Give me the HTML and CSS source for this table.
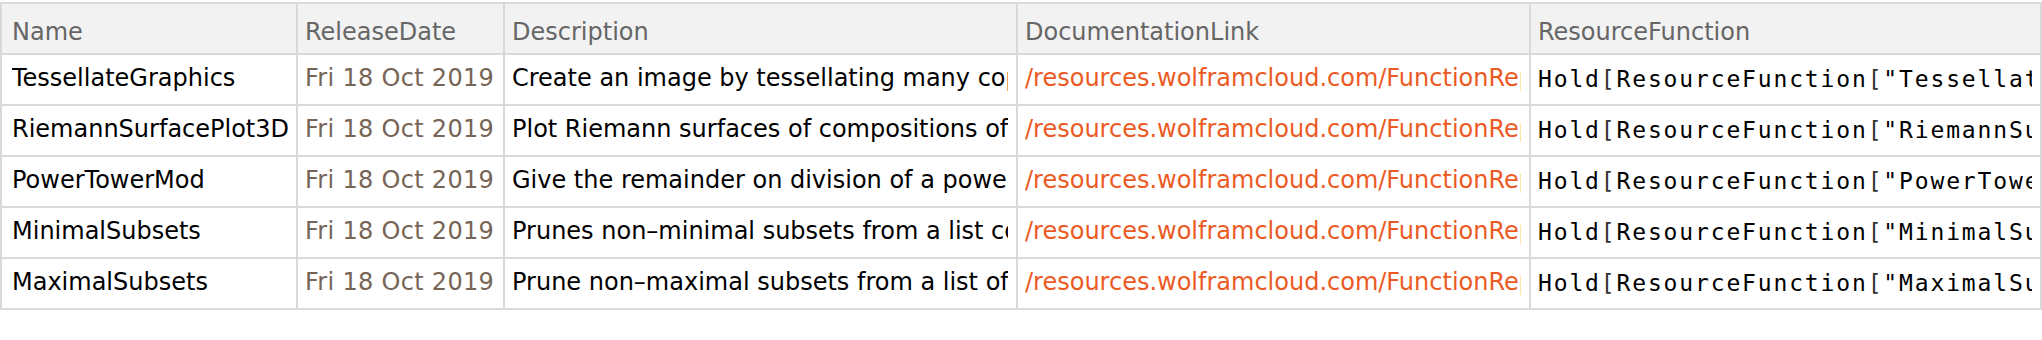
FILE: index.html
```html
<!DOCTYPE html>
<html lang="en">
<head>
    <meta charset="utf-8">
    <title>Dataset</title>
    <link rel="stylesheet" href="styles.css">
</head>
<body>
    <table class="dataset">
        <thead>
            <tr>
                <th class="col-name"><div class="cell">Name</div></th>
                <th class="col-date"><div class="cell">ReleaseDate</div></th>
                <th class="col-wide"><div class="cell">Description</div></th>
                <th class="col-wide"><div class="cell">DocumentationLink</div></th>
                <th class="col-last"><div class="cell">ResourceFunction</div></th>
            </tr>
        </thead>
        <tbody>
            <tr>
                <td><div class="cell">TessellateGraphics</div></td>
                <td class="date"><div class="cell">Fri 18 Oct 2019</div></td>
                <td><div class="cell">Create an image by tessellating many copies of a graphic</div></td>
                <td class="link"><div class="cell">/resources.wolframcloud.com/FunctionRepository/resources/TessellateGraphics</div></td>
                <td class="code"><div class="cell">Hold<span class="br">[</span>ResourceFunction<span class="br">[</span>"TessellateGraphics"<span class="br">]]</span></div></td>
            </tr>
            <tr>
                <td><div class="cell">RiemannSurfacePlot3D</div></td>
                <td class="date"><div class="cell">Fri 18 Oct 2019</div></td>
                <td><div class="cell">Plot Riemann surfaces of compositions of functions</div></td>
                <td class="link"><div class="cell">/resources.wolframcloud.com/FunctionRepository/resources/RiemannSurfacePlot3D</div></td>
                <td class="code"><div class="cell">Hold<span class="br">[</span>ResourceFunction<span class="br">[</span>"RiemannSurfacePlot3D"<span class="br">]]</span></div></td>
            </tr>
            <tr>
                <td><div class="cell">PowerTowerMod</div></td>
                <td class="date"><div class="cell">Fri 18 Oct 2019</div></td>
                <td><div class="cell">Give the remainder on division of a power tower by a number</div></td>
                <td class="link"><div class="cell">/resources.wolframcloud.com/FunctionRepository/resources/PowerTowerMod</div></td>
                <td class="code"><div class="cell">Hold<span class="br">[</span>ResourceFunction<span class="br">[</span>"PowerTowerMod"<span class="br">]]</span></div></td>
            </tr>
            <tr>
                <td><div class="cell">MinimalSubsets</div></td>
                <td class="date"><div class="cell">Fri 18 Oct 2019</div></td>
                <td><div class="cell">Prunes non&#8211;minimal subsets from a list containing sets</div></td>
                <td class="link"><div class="cell">/resources.wolframcloud.com/FunctionRepository/resources/MinimalSubsets</div></td>
                <td class="code"><div class="cell">Hold<span class="br">[</span>ResourceFunction<span class="br">[</span>"MinimalSubsets"<span class="br">]]</span></div></td>
            </tr>
            <tr>
                <td><div class="cell">MaximalSubsets</div></td>
                <td class="date"><div class="cell">Fri 18 Oct 2019</div></td>
                <td><div class="cell">Prune non&#8211;maximal subsets from a list of sets</div></td>
                <td class="link"><div class="cell">/resources.wolframcloud.com/FunctionRepository/resources/MaximalSubsets</div></td>
                <td class="code"><div class="cell">Hold<span class="br">[</span>ResourceFunction<span class="br">[</span>"MaximalSubsets"<span class="br">]]</span></div></td>
            </tr>
        </tbody>
    </table>
</body>
</html>
```

FILE: styles.css
```css
* {
    margin: 0;
    padding: 0;
    box-sizing: border-box;
}

body {
    font-family: "DejaVu Sans", Verdana, sans-serif;
    font-size: 24px;
    background: white;
    color: #000;
    padding-top: 2px;
}

.dataset {
    table-layout: fixed;
    border-collapse: separate;
    border-spacing: 2px;
    background: #d9d9d9;
    width: 2042px;
}

.col-name { width: 294px; }
.col-date { width: 205px; }
.col-wide { width: 511px; }
.col-last { width: 509px; }

th, td {
    height: 49px;
    padding: 0 8px 0 7px;
    text-align: left;
    font-weight: normal;
    vertical-align: top;
    background: white;
}

th {
    background: #f2f2f2;
    color: #666;
}

th:first-child, td:first-child {
    padding-left: 10px;
}

.cell {
    overflow: hidden;
    white-space: nowrap;
    line-height: 28px;
    padding-top: 9px;
}

th .cell {
    padding-top: 14px;
}

.date {
    color: #766556;
    letter-spacing: 0.3px;
}

.link {
    color: #ec5a24;
}

.code {
    font-family: "DejaVu Sans Mono", monospace;
    font-size: 23px;
    letter-spacing: 1.85px;
}

.code .cell {
    padding-top: 10px;
}

.br {
    color: #333;
}
```
